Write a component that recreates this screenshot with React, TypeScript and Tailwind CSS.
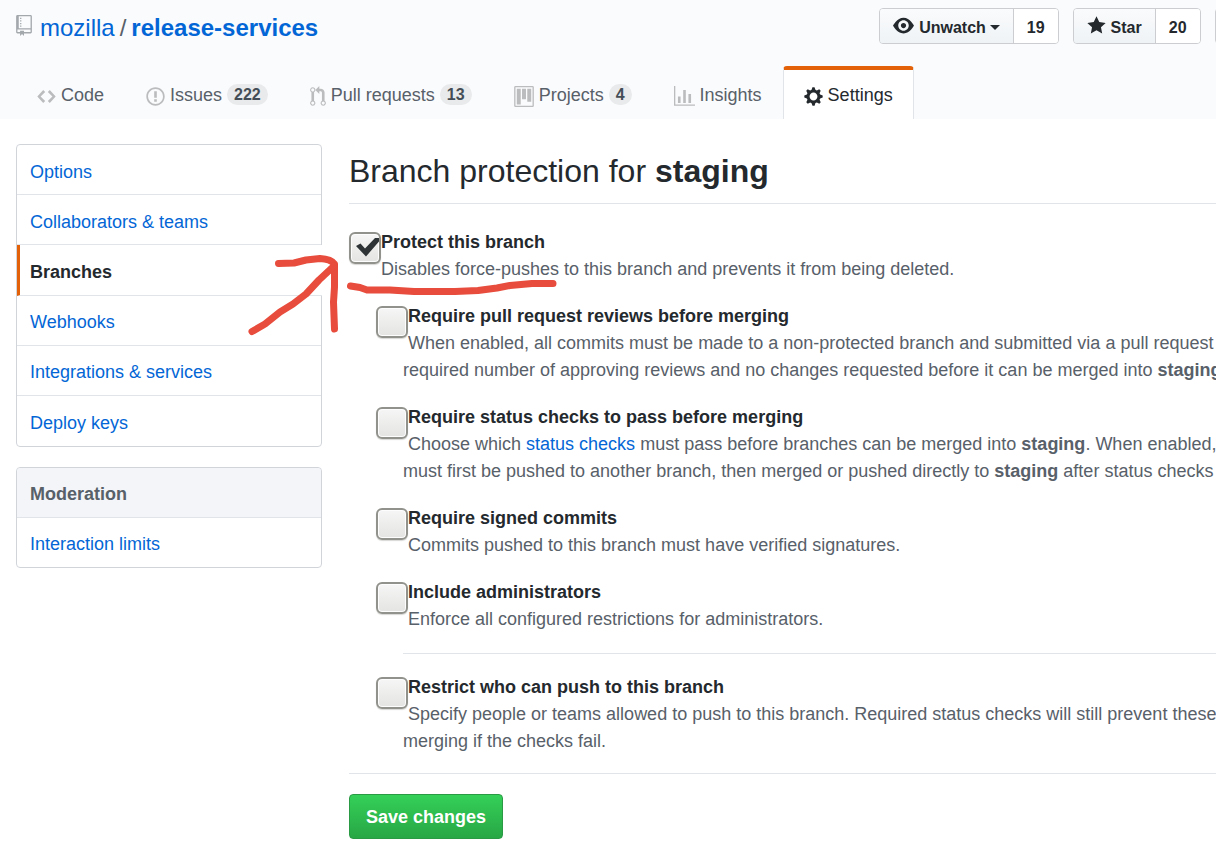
import type { ReactNode } from "react";

const icons = {
  repo: {
    box: "0 0 12 16",
    size: "w-4",
    d: "M4 9H3V8h1v1zm0-3H3v1h1V6zm0-2H3v1h1V4zm0-2H3v1h1V2zm8-1v12c0 .55-.45 1-1 1H6v2l-1.5-1.5L3 16v-2H1c-.55 0-1-.45-1-1V1c0-.55.45-1 1-1h10c.55 0 1 .45 1 1zm-1 10H1v2h2v-1h3v1h5v-2zm0-10H2v9h9V1z",
  },
  code: {
    box: "0 0 14 16",
    size: "w-[19px]",
    d: "M9.5 3L8 4.5 11.5 8 8 11.5 9.5 13 14 8 9.5 3zm-5 0L0 8l4.5 5L6 11.5 2.5 8 6 4.5 4.5 3z",
  },
  issue: {
    box: "0 0 14 16",
    size: "w-[19px]",
    d: "M7 2.3c3.14 0 5.7 2.56 5.7 5.7s-2.56 5.7-5.7 5.7A5.71 5.71 0 0 1 1.3 8c0-3.14 2.56-5.7 5.7-5.7zM7 1C3.14 1 0 4.14 0 8s3.14 7 7 7 7-3.14 7-7-3.14-7-7-7zm1 3H6v5h2V4zm0 6H6v2h2v-2z",
  },
  pull: {
    box: "0 0 12 16",
    size: "w-4",
    d: "M11 11.28V5c-.03-.78-.34-1.47-.94-2.06C9.46 2.35 8.78 2.03 8 2H7V0L4 3l3 3V4h1c.27.02.48.11.69.31.21.2.3.42.31.69v6.28A1.993 1.993 0 0 0 10 15a1.993 1.993 0 0 0 1-3.72zm-1 2.92c-.66 0-1.2-.55-1.2-1.2 0-.65.55-1.2 1.2-1.2.65 0 1.2.55 1.2 1.2 0 .65-.55 1.2-1.2 1.2zM4 3c0-1.11-.89-2-2-2a1.993 1.993 0 0 0-1 3.72v6.56A1.993 1.993 0 0 0 2 15a1.993 1.993 0 0 0 1-3.72V4.72c.59-.34 1-.98 1-1.72zm-.8 10c0 .66-.55 1.2-1.2 1.2-.65 0-1.2-.55-1.2-1.2 0-.65.55-1.2 1.2-1.2.65 0 1.2.55 1.2 1.2zM2 4.2C1.34 4.2.8 3.65.8 3c0-.65.55-1.2 1.2-1.2.65 0 1.2.55 1.2 1.2 0 .65-.55 1.2-1.2 1.2z",
  },
  project: {
    box: "0 0 15 16",
    size: "w-5",
    d: "M10 12h3V2h-3v10zm-4-2h3V2H6v8zm-4 4h3V2H2v12zm-1 1h13V1H1v14zM14 0H1a1 1 0 0 0-1 1v14a1 1 0 0 0 1 1h13a1 1 0 0 0 1-1V1a1 1 0 0 0-1-1z",
  },
  graph: {
    box: "0 0 16 16",
    size: "w-[21px]",
    d: "M16 14v1H0V0h1v14h15zM5 13H3V8h2v5zm4 0H7V3h2v10zm4 0h-2V6h2v7z",
  },
  gear: {
    box: "0 0 14 16",
    size: "w-[19px]",
    d: "M14 8.77v-1.6l-1.94-.64-.45-1.09.88-1.84-1.13-1.13-1.81.91-1.09-.45-.69-1.92h-1.6l-.63 1.94-1.11.45-1.84-.88-1.13 1.13.91 1.81-.45 1.09L0 7.23v1.59l1.94.64.45 1.09-.88 1.84 1.13 1.13 1.81-.91 1.09.45.69 1.92h1.59l.63-1.94 1.11-.45 1.84.88 1.13-1.13-.92-1.81.47-1.09L14 8.75v.02zM7 11c-1.66 0-3-1.34-3-3s1.34-3 3-3 3 1.34 3 3-1.34 3-3 3z",
  },
  eye: {
    box: "0 0 16 16",
    size: "w-[21px]",
    d: "M8.06 2C3 2 0 8 0 8s3 6 8.06 6C13 14 16 8 16 8s-3-6-7.94-6zM8 12c-2.2 0-4-1.78-4-4 0-2.2 1.8-4 4-4 2.22 0 4 1.8 4 4 0 2.22-1.78 4-4 4zm2-4c0 1.11-.89 2-2 2-1.11 0-2-.89-2-2 0-1.11.89-2 2-2 1.11 0 2 .89 2 2z",
  },
  star: {
    box: "0 0 14 16",
    size: "w-[19px]",
    d: "M14 6l-4.9-.64L7 1 4.9 5.36 0 6l3.6 3.26L2.67 14 7 11.67 11.33 14l-.93-4.74z",
  },
};

type IconName = keyof typeof icons;

function Icon({ name, className = "" }: { name: IconName; className?: string }) {
  const icon = icons[name];
  return (
    <svg
      viewBox={icon.box}
      className={`h-[21px] shrink-0 fill-current ${icon.size} ${className}`}
      fillRule="evenodd"
      aria-hidden="true"
    >
      <path d={icon.d} />
    </svg>
  );
}

function CountButton({
  icon,
  label,
  count,
  caret = false,
}: {
  icon?: IconName;
  label: string;
  count: string;
  caret?: boolean;
}) {
  return (
    <div className="flex h-9 overflow-hidden rounded border border-[#cbcdd0] text-base font-bold text-[#24292e]">
      <button
        type="button"
        className="flex items-center gap-[5px] border-r border-[#cbcdd0] bg-linear-to-b from-[#fafbfc] to-[#eff3f6] px-[13px] pt-[3px]"
      >
        {icon && <Icon name={icon} className="-mt-1" />}
        {label}
        {caret && <span className="-ml-px border-x-[5px] border-t-[5px] border-x-transparent border-t-current" />}
      </button>
      <a href="#count" className="flex items-center bg-white px-[13px] pt-[3px]">
        {count}
      </a>
    </div>
  );
}

const tabs: { icon: IconName; label: string; count?: string; active?: boolean }[] = [
  { icon: "code", label: "Code" },
  { icon: "issue", label: "Issues", count: "222" },
  { icon: "pull", label: "Pull requests", count: "13" },
  { icon: "project", label: "Projects", count: "4" },
  { icon: "graph", label: "Insights" },
  { icon: "gear", label: "Settings", active: true },
];

function Tab({ icon, label, count, active }: (typeof tabs)[number]) {
  return (
    <a
      href="#tab"
      aria-current={active ? "page" : undefined}
      className={`flex h-[53px] items-center gap-[5px] rounded-t border-x border-t-4 px-5 text-lg ${
        active
          ? "border-x-[#e1e4e8] border-t-[#e36209] bg-white text-[#24292e]"
          : "border-transparent text-[#586069]"
      }`}
    >
      <Icon name={icon} className={active ? "mt-1" : "mt-1 text-[#bbbcbd]"} />
      {label}
      {count && (
        <span className="rounded-full bg-[#e8eaeb] px-[7px] text-base leading-[21px] font-bold text-[#444d56]">
          {count}
        </span>
      )}
    </a>
  );
}

const menu = ["Options", "Collaborators & teams", "Branches", "Webhooks", "Integrations & services", "Deploy keys"];

function Rule({
  id,
  label,
  checked = false,
  children,
}: {
  id: string;
  label: string;
  checked?: boolean;
  children: ReactNode;
}) {
  return (
    <div className="pl-[27px]">
      <span className="float-left mt-[3px] -ml-[27px] grid size-8">
        <input
          id={id}
          type="checkbox"
          defaultChecked={checked}
          className="peer col-start-1 row-start-1 size-8 appearance-none rounded-md border-2 border-[#92928d] bg-linear-to-b from-[#f6f6f6] to-[#e4e4e2] shadow-[inset_0_0_0_1px_#fdfdfd,0_1px_1px_#d8d8d6]"
        />
        <svg
          viewBox="0 0 32 32"
          className="pointer-events-none invisible col-start-1 row-start-1 size-8 peer-checked:visible"
          aria-hidden="true"
        >
          <path d="M7 14L11.500 11.500L16 16.500L26 6H30V9.500L17 24.500z" fill="#2e3436" />
        </svg>
      </span>
      <label htmlFor={id} className="block text-lg leading-[27px] font-bold text-[#24292e]">
        {label}
      </label>
      <p className="text-lg leading-[27px] text-[#586069]">{children}</p>
    </div>
  );
}

export default function App() {
  return (
    <div className="relative min-h-screen overflow-x-hidden bg-white font-['Liberation_Sans',Arial,sans-serif]">
      <header className="bg-[#fafbfc]">
        <div className="w-full min-w-[1330px] pl-4">
          <div className="flex items-start justify-between pt-2 pr-2">
            <h1 className="flex text-2xl leading-10 text-[#586069]">
              <Icon name="repo" className="mt-[7px] mr-2 text-[#a3a8ad]" />
              <a href="#owner" className="text-[#0366d6]">
                mozilla
              </a>
              <span className="mx-[5px]">/</span>
              <a href="#repo" className="font-bold text-[#0366d6]">
                release-services
              </a>
            </h1>
            <div className="flex gap-[14px]">
              <CountButton icon="eye" label="Unwatch" count="19" caret />
              <CountButton icon="star" label="Star" count="20" />
              <CountButton label="Fork" count="17" />
            </div>
          </div>
          <nav className="flex pt-[18px]" aria-label="Repository">
            {tabs.map((tab) => (
              <Tab key={tab.label} {...tab} />
            ))}
          </nav>
        </div>
      </header>

      <div className="flex w-full min-w-[1330px] items-start gap-[27px] pt-[25px] pl-4">
        <aside className="flex w-[306px] shrink-0 flex-col gap-5 text-lg">
          <nav
            className="grid min-h-[303px] auto-rows-fr divide-y divide-[#e1e4e8] rounded border border-[#d1d5da]"
            aria-label="Settings"
          >
            {menu.map((item) =>
              item === "Branches" ? (
                <a
                  key={item}
                  href="#branches"
                  aria-current="page"
                  className="-mr-px flex items-center border-l-[3px] border-l-[#e36209] bg-white pt-1 pl-[10px] font-bold text-[#24292e]"
                >
                  {item}
                </a>
              ) : (
                <a key={item} href="#menu" className="flex items-center pt-1 pl-[13px] text-[#0366d6]">
                  {item}
                </a>
              ),
            )}
          </nav>
          <nav
            className="grid min-h-[101px] auto-rows-fr divide-y divide-[#e1e4e8] rounded border border-[#d1d5da]"
            aria-label="Moderation"
          >
            <h3 className="flex items-center rounded-t bg-[#f3f5f8] pt-1 pl-[13px] font-bold text-[#586069]">
              Moderation
            </h3>
            <a href="#limits" className="flex items-center pt-1 pl-[13px] text-[#0366d6]">
              Interaction limits
            </a>
          </nav>
        </aside>

        <main className="min-w-0 flex-1">
          <h2 className="border-b border-[#e1e4e8] pb-[5px] text-[32px] leading-[54px] text-[#24292e]">
            Branch protection for <strong>staging</strong>
          </h2>
          <form className="pt-[25px]">
            <Rule id="protect" label="Protect this branch" checked>
              Disables force-pushes to this branch and prevents it from being deleted.
            </Rule>
            <div className="flex flex-col gap-5 pt-5 pl-[27px]">
              <Rule id="reviews" label="Require pull request reviews before merging">
                When enabled, all commits must be made to a non-protected branch and submitted via a pull request with
                the required number of approving reviews and no changes requested before it can be merged into{" "}
                <strong>staging</strong>.
              </Rule>
              <Rule id="status" label="Require status checks to pass before merging">
                Choose which{" "}
                <a href="#status-checks" className="text-[#0366d6]">
                  status checks
                </a>{" "}
                must pass before branches can be merged into <strong>staging</strong>. When enabled, commits must first
                be pushed to another branch, then merged or pushed directly to <strong>staging</strong> after status
                checks have passed.
              </Rule>
              <Rule id="signed" label="Require signed commits">
                Commits pushed to this branch must have verified signatures.
              </Rule>
              <Rule id="admins" label="Include administrators">
                Enforce all configured restrictions for administrators.
              </Rule>
              <hr className="ml-[27px] border-[#e1e4e8]" />
              <Rule id="restrict" label="Restrict who can push to this branch">
                Specify people or teams allowed to push to this branch. Required status checks will still prevent these
                people from merging if the checks fail.
              </Rule>
            </div>
            <div className="mt-[18px] border-t border-[#e1e4e8] pt-5 pb-6">
              <button
                type="submit"
                className="h-[45px] rounded border border-[#2a9a44] bg-linear-to-b from-[#34d058] to-[#28a745] px-4 text-lg font-bold text-white"
              >
                Save changes
              </button>
            </div>
          </form>
        </main>
      </div>

      {/* Hand-drawn arrow and underline over the first rule */}
      <svg
        className="pointer-events-none absolute top-[220px] left-[240px] h-[130px] w-[340px]"
        viewBox="0 0 340 130"
        fill="none"
        stroke="#e74c3c"
        strokeWidth="7"
        strokeLinecap="round"
        strokeLinejoin="round"
        aria-hidden="true"
      >
        <path d="M38.500 43.500L54 43L66 40L80 38.500Q91 39 94.500 44V67L93.500 82L94.500 109" />
        <path d="M12 111.500L25 104L40 92L53 84L66 74L79 60L94 46" />
        <path d="M110.500 66L120 67.500L127 70H150L174 71.500H215L238 70.500L257 68L270 65.500L292 63.500H313" />
      </svg>
    </div>
  );
}
